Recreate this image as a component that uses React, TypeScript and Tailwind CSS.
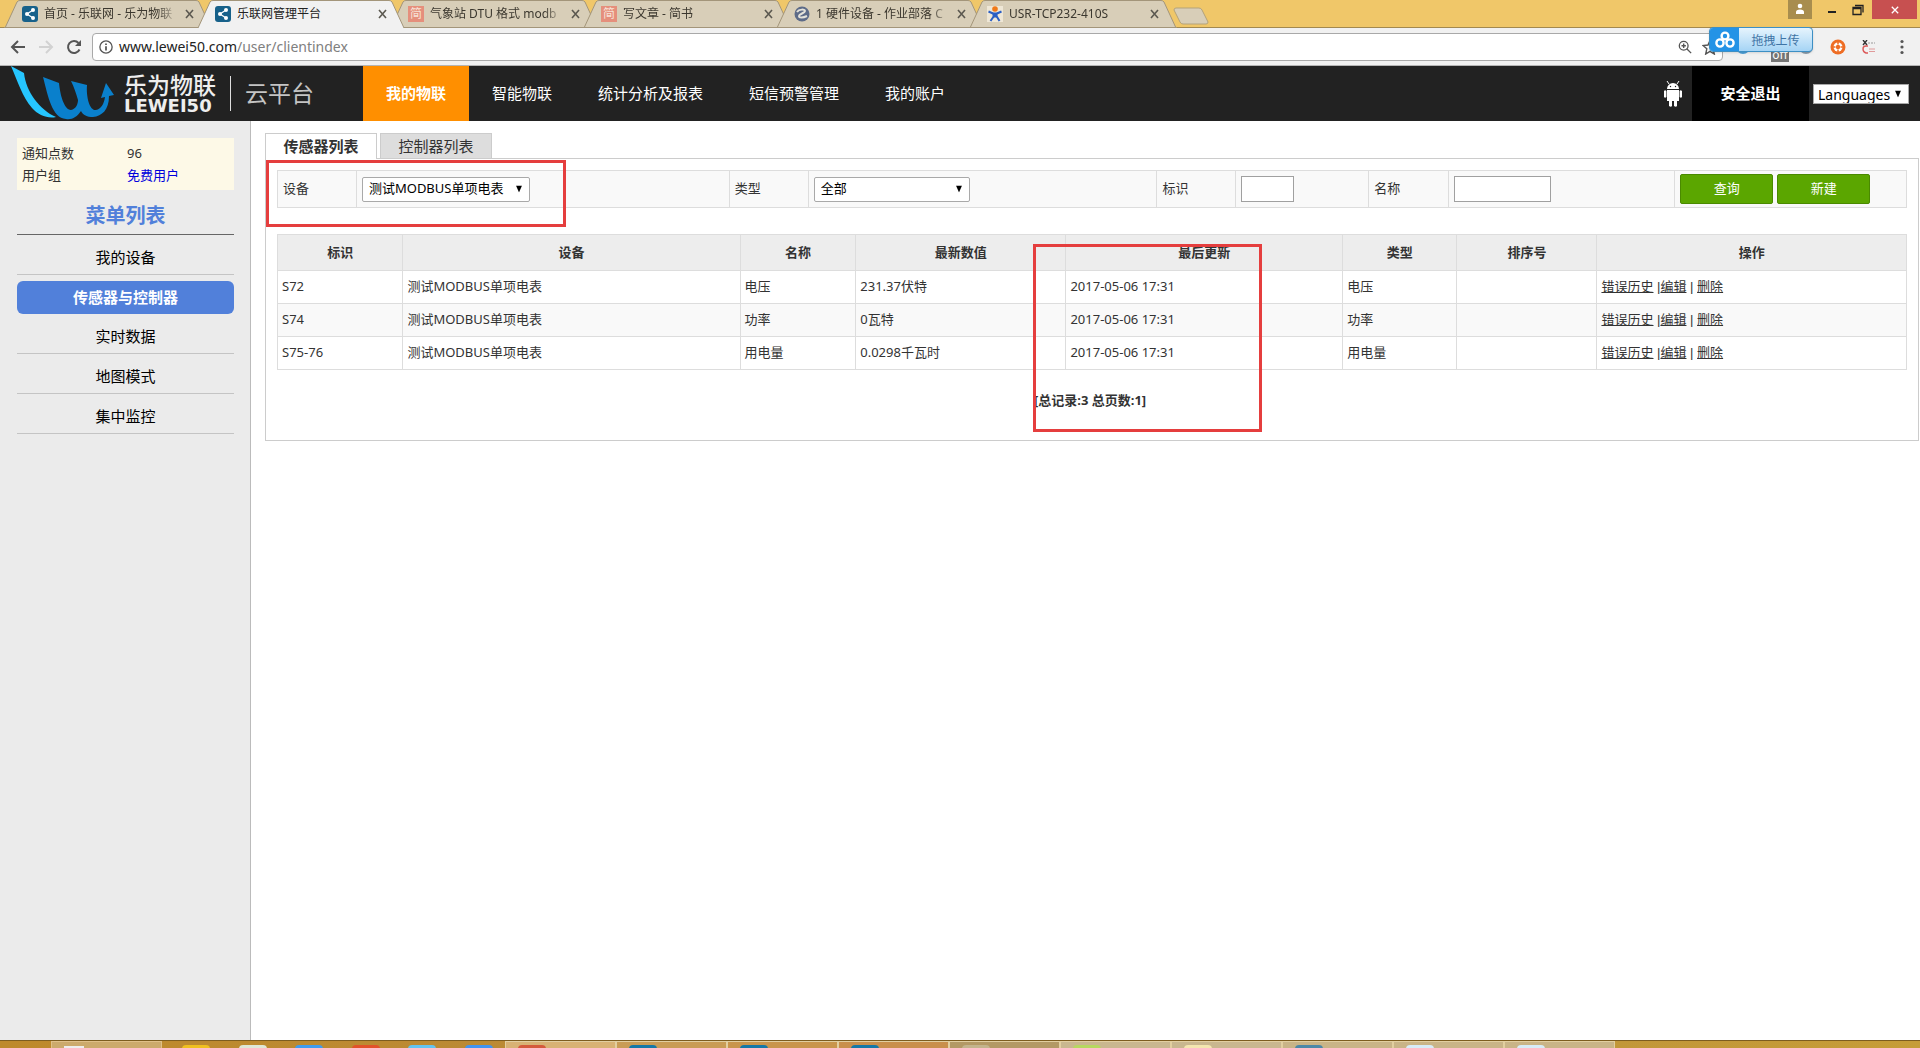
import { useState } from "react";
import type { ReactNode } from "react";

const tabs = [
  { title: "首页 - 乐联网 - 乐为物联", icon: "lewei" },
  { title: "乐联网管理平台", icon: "lewei", active: true },
  { title: "气象站 DTU 格式 modb", icon: "jian" },
  { title: "写文章 - 简书", icon: "jian" },
  { title: "1 硬件设备 - 作业部落 C", icon: "zuoye" },
  { title: "USR-TCP232-410S", icon: "usr" },
];

const navItems = ["我的物联", "智能物联", "统计分析及报表", "短信预警管理", "我的账户"];

const menuItems = ["我的设备", "传感器与控制器", "实时数据", "地图模式", "集中监控"];

const columns = [
  { name: "标识", width: "w-[7.7%]" },
  { name: "设备", width: "w-[20.7%]" },
  { name: "名称", width: "w-[7.1%]" },
  { name: "最新数值", width: "w-[12.9%]" },
  { name: "最后更新", width: "w-[17%]" },
  { name: "类型", width: "w-[7%]" },
  { name: "排序号", width: "w-[8.6%]" },
  { name: "操作", width: "w-[19%]" },
];

const sensors = [
  { id: "S72", device: "测试MODBUS单项电表", name: "电压", value: "231.37伏特", time: "2017-05-06 17:31", type: "电压" },
  { id: "S74", device: "测试MODBUS单项电表", name: "功率", value: "0瓦特", time: "2017-05-06 17:31", type: "功率" },
  { id: "S75-76", device: "测试MODBUS单项电表", name: "用电量", value: "0.0298千瓦时", time: "2017-05-06 17:31", type: "用电量" },
];

function Favicon({ kind }: { kind: string }) {
  if (kind === "jian") {
    return (
      <span className="flex h-4 w-4 shrink-0 items-center justify-center bg-[#e58f7c] text-xs leading-4 text-[#f7e3d8]">简</span>
    );
  }
  if (kind === "zuoye") {
    return (
      <svg viewBox="0 0 16 16" className="h-4 w-4 shrink-0">
        <circle cx="8" cy="8" r="7.5" fill="#5d6b88" />
        <path d="M3 6c2-3 8-3 8-1S5 8 5 10s4 2 8 0" fill="none" stroke="#e4e2da" strokeWidth="2" />
      </svg>
    );
  }
  if (kind === "usr") {
    return (
      <svg viewBox="0 0 16 16" className="h-4 w-4 shrink-0">
        <rect width="16" height="16" fill="#efe7d6" />
        <circle cx="8" cy="3" r="2.8" fill="#f07a1a" />
        <path d="M1.5 5.500L6 7.500M14.500 5.500L10 7.500M7 10l-3.500 5M9.500 10l3 5" stroke="#2b5fc4" strokeWidth="2" />
        <path d="M5 6.500h6l-1 5H6z" fill="#2b5fc4" />
      </svg>
    );
  }
  return (
    <svg viewBox="0 0 16 16" className="h-4 w-4 shrink-0">
      <rect width="16" height="16" rx="3" fill="#17618a" />
      <path d="M11 4L5 8l6 4" fill="none" stroke="#fff" strokeWidth="1.2" />
      <circle cx="11" cy="4" r="2" fill="#fff" />
      <circle cx="5" cy="8" r="2" fill="#fff" />
      <circle cx="11" cy="12" r="2" fill="#fff" />
    </svg>
  );
}

function TabStrip() {
  return (
    <div className="flex h-7 border-b border-[#a3894f] bg-[#f0c769] pl-1">
      {tabs.map((tab) => (
        <div key={tab.title} className={tab.active ? "relative z-10 -mr-[15px] h-7 w-52 shrink-0" : "relative -mr-[15px] h-7 w-52 shrink-0"}>
          <svg viewBox="0 0 208 28" className="absolute inset-0 h-7 w-52">
            <path
              d="M1 28L13 2Q14 .5 16 .5H192Q194 .5 195 2L207 28"
              fill={tab.active ? "#f1f1f1" : "#d8ceb8"}
              stroke="#a3957a"
            />
            {!tab.active && <path d="M0 27.5H208" stroke="#a3957a" />}
          </svg>
          <div className="relative flex h-7 items-center gap-1.5 pr-4 pl-[18px] text-xs text-[#222]">
            <Favicon kind={tab.icon} />
            <span className={tab.active ? "w-[134px] whitespace-nowrap" : "w-[134px] mask-r-from-85% whitespace-nowrap text-[#3c382f]"}>
              {tab.title}
            </span>
            <button aria-label="关闭标签" className="h-3 w-3">
              <svg viewBox="0 0 12 12" className="h-3 w-3">
                <path d="M2 2l7 8M9 2L2 10" stroke="#5b5850" strokeWidth="1.6" />
              </svg>
            </button>
          </div>
        </div>
      ))}
      <button aria-label="新标签" className="mt-[7px] ml-[11px] h-[18px] w-9">
        <svg viewBox="0 0 36 18" className="h-[18px] w-9">
          <path d="M3 1H26Q28 1 29 3L35 15Q35 17 33 17H10Q8 17 7 15L1 3Q1 1 3 1Z" fill="#d8ceb8" stroke="#b3a27a" />
        </svg>
      </button>
      <div className="ml-auto flex h-[19px] pr-[3px]">
        <button aria-label="用户" className="flex w-6 items-center justify-center bg-[#a88d4e]">
          <svg viewBox="0 0 10 12" className="mb-0.5 h-3 w-2.5">
            <circle cx="5" cy="3" r="2.3" fill="#fff" />
            <path d="M1 11V9Q1 6.500 5 6.500T9 9V11Z" fill="#fff" />
          </svg>
        </button>
        <button aria-label="最小化" className="flex w-10 items-end justify-center pb-1.5">
          <span className="h-0.5 w-2 bg-[#222]" />
        </button>
        <button aria-label="还原" className="flex w-5 items-center">
          <svg viewBox="0 0 12 12" className="h-3 w-3">
            <path d="M1 3.500h8v7H1zM1 4.500h8M3 1.500h8v7" fill="none" stroke="#222" strokeWidth="1.3" />
          </svg>
        </button>
        <button aria-label="关闭" className="flex w-[45px] items-center justify-center bg-[#c75050] text-white">
          <svg viewBox="0 0 10 10" className="h-2 w-2.5">
            <path d="M1 1l8 8M9 1L1 9" stroke="#fff" strokeWidth="1.6" />
          </svg>
        </button>
      </div>
    </div>
  );
}

function UploadWidget() {
  return (
    <button className="absolute -top-px right-[107px] z-20 flex h-[25px] w-[104px] overflow-hidden rounded-sm border border-[#3d8fc4] bg-linear-to-b from-[#e6f4fd] to-[#a5d4f5] shadow">
      <span className="flex h-full w-[29px] items-center justify-center bg-[#2493e6]">
        <svg viewBox="0 0 20 18" className="h-[18px] w-5">
          <g fill="none" stroke="#fff" strokeWidth="2.400">
            <circle cx="10" cy="5" r="3.400" />
            <circle cx="5" cy="12" r="3.600" />
            <circle cx="15" cy="12" r="3.600" />
          </g>
        </svg>
      </span>
      <span className="flex-1 text-xs leading-[25px] text-[#3f74a5]">拖拽上传</span>
    </button>
  );
}

function Toolbar() {
  return (
    <div className="relative flex h-[38px] items-center border-b border-[#b5b5b5] bg-[#f1f1f1] pl-2.5">
      <button aria-label="后退" className="w-7">
        <svg viewBox="0 0 16 16" className="h-4 w-4">
          <path d="M15 8H2M8 2L2 8l6 6" fill="none" stroke="#555" strokeWidth="2" />
        </svg>
      </button>
      <button aria-label="前进" className="w-7">
        <svg viewBox="0 0 16 16" className="h-4 w-4">
          <path d="M1 8h13M8 2l6 6-6 6" fill="none" stroke="#d2d2d2" strokeWidth="2" />
        </svg>
      </button>
      <button aria-label="刷新" className="w-[26px]">
        <svg viewBox="0 0 16 16" className="h-4 w-4">
          <path d="M13.500 10.500A6 6 0 1 1 12.500 4" fill="none" stroke="#555" strokeWidth="2" />
          <path d="M15 1v6H9z" fill="#555" />
        </svg>
      </button>
      <div className="flex h-7 flex-1 items-center rounded-sm border border-[#a9a9a9] bg-white pr-1 pl-1.5 text-sm">
        <svg viewBox="0 0 16 16" className="mr-1.5 h-3.5 w-3.5">
          <circle cx="8" cy="8" r="7" fill="none" stroke="#555" strokeWidth="1.500" />
          <path d="M8 7v5M8 4v1.800" stroke="#555" strokeWidth="2" />
        </svg>
        <span className="flex-1 text-[#222]">
          www.lewei50.com<span className="text-[#808080]">/user/clientindex</span>
        </span>
        <svg viewBox="0 0 16 16" className="mr-2.5 h-3.5 w-3.5">
          <circle cx="6.500" cy="6.500" r="5" fill="none" stroke="#555" strokeWidth="1.500" />
          <path d="M10 10l5 5M4 6.500h5M6.500 4v5" stroke="#555" strokeWidth="1.600" />
        </svg>
        <svg viewBox="0 0 16 16" className="h-4 w-4">
          <path d="M8 1.500l2 4.500 5 .5-3.800 3.300L12.300 15 8 12.300 3.700 15l1.100-5.200L1 6.500l5-.5z" fill="none" stroke="#555" strokeWidth="1.400" />
        </svg>
      </div>
      <div className="flex w-[197px] items-center pl-[13px]">
        <span className="h-3.5 w-3.5 rounded-full bg-[#4c9fd8]" />
        <span className="mt-[18px] ml-[21px] h-3 w-[18px] bg-[#757575] text-center text-xs leading-[10px] text-white">off</span>
        <span className="ml-2.5 h-3.5 w-3.5 rounded-full bg-[#8a9cab]" />
        <svg viewBox="0 0 16 16" className="ml-[17px] h-4 w-4">
          <circle cx="8" cy="8" r="7.500" fill="#ee6d24" />
          <circle cx="8" cy="8" r="4.500" fill="#fff" />
          <circle cx="8" cy="8" r="2.200" fill="#ee6d24" />
          <path d="M8 2.500v3M13.500 8h-3M8 13.500v-3M2.500 8h3" stroke="#ee6d24" strokeWidth="1.500" />
        </svg>
        <svg viewBox="0 0 14 14" className="ml-4 h-3.5 w-3.5">
          <path d="M1 0l4 5M5 0L1 5" stroke="#333" strokeWidth="1.400" />
          <path d="M6 3h7" stroke="#999" strokeDasharray="2 1" />
          <path d="M6 6H4Q1 6 1 9t3 4h2" fill="none" stroke="#dc5a5a" strokeWidth="1.400" />
          <path d="M7 9h6M7 11.500h6" stroke="#e09a9a" />
        </svg>
        <svg viewBox="0 0 4 16" className="ml-6 h-4 w-1">
          <circle cx="2" cy="2.500" r="1.600" fill="#555" />
          <circle cx="2" cy="8" r="1.600" fill="#555" />
          <circle cx="2" cy="13.500" r="1.600" fill="#555" />
        </svg>
      </div>
      <UploadWidget />
    </div>
  );
}

function Logo() {
  return (
    <a href="#" className="flex w-[363px] shrink-0 items-center pl-2.5">
      <svg viewBox="0 0 106 55" className="h-[55px] w-[106px] shrink-0">
        <path d="M1 0L14 7C16 26 30 44 46 51C38 53 28 49 22 42C12 30 8 16 1 0Z" fill="#26c6ff" />
        <path
          d="M33 11L49 17C50 28 54 44 61 44C66 43 68 38 68 34C66 27 64 21 61 15L77 19C76 32 80 45 86 44C91 43 94 38 95 31L91 32L96 17L104 29L99 30C99 44 92 50 83 51C77 51 73 49 71 45C67 51 62 54 56 53C42 52 38 30 33 11Z"
          fill="#0a80cc"
        />
      </svg>
      <div className="ml-2 flex w-[94px] shrink-0 flex-col whitespace-nowrap text-[#eee]">
        <span className="text-[23px] leading-6 font-medium">乐为物联</span>
        <span className="font-['DejaVu_Sans',sans-serif] text-lg leading-[18px] font-bold">LEWEI50</span>
      </div>
      <span className="ml-3 h-[35px] w-px bg-[#ddd]" />
      <span className="ml-3.5 text-[23px] text-[#c4c4c4]">云平台</span>
    </a>
  );
}

function Header() {
  return (
    <header className="flex h-[55px] bg-[#222] text-[15px] text-white">
      <Logo />
      <nav className="flex">
        {navItems.map((item, i) => (
          <a
            key={item}
            href="#"
            className={i === 0 ? "flex items-center bg-[#ff8f00] px-[23px] font-bold" : "flex items-center px-[23px]"}
          >
            {item}
          </a>
        ))}
      </nav>
      <div className="ml-auto flex items-center">
        <svg viewBox="0 0 18 26" className="mr-2.5 h-[26px] w-[18px]">
          <path d="M3 8A6 6 0 0 1 15 8ZM3 9h12v11h-2v5q-1 1.500-3 0v-5H8v5q-1 1.500-3 0v-5H3zM0 10q1-1.500 2.400 0v6Q1 17.500 0 16zM15.600 10q1-1.500 2.400 0v6q-1 1.500-2.400 0z" fill="#fff" />
          <path d="M5 3L3 0M13 3l2-3" stroke="#fff" />
          <circle cx="6.500" cy="5.500" r=".7" fill="#222" />
          <circle cx="11.500" cy="5.500" r=".7" fill="#222" />
        </svg>
        <a href="#" className="flex h-full w-[117px] items-center justify-center bg-black text-[15px] font-bold">
          安全退出
        </a>
        <div className="mr-[11px] ml-1 w-24">
          <Dropdown id="lang" label="Languages" options={["Languages"]} className="h-5 text-sm" />
        </div>
      </div>
    </header>
  );
}

function Dropdown({ id, label, options, className }: { id: string; label: string; options: string[]; className: string }) {
  return (
    <div className="relative">
      <select
        id={id}
        aria-label={label}
        className={`block w-full appearance-none border border-[#a9a9a9] bg-white pl-1 text-black ${className}`}
      >
        {options.map((o) => (
          <option key={o}>{o}</option>
        ))}
      </select>
      <svg viewBox="0 0 6 7" className="pointer-events-none absolute top-1/2 right-2 h-[7px] w-1.5 -translate-y-1/2">
        <path d="M0 0h6L3 7z" fill="#000" />
      </svg>
    </div>
  );
}

function Sidebar() {
  const [current, setCurrent] = useState("传感器与控制器");

  return (
    <aside className="w-[251px] shrink-0 border-r border-[#bbb] bg-[#ebebeb] pt-[17px] pr-4 pl-[17px]">
      <dl className="grid grid-cols-[105px_1fr] bg-[#fdf9e7] px-[5px] py-1 text-[13px] leading-[22px] text-[#333]">
        <dt>通知点数</dt>
        <dd>96</dd>
        <dt>用户组</dt>
        <dd>
          <a href="#" className="text-[#0000dd]">免费用户</a>
        </dd>
      </dl>
      <h2 className="border-b border-[#666] pt-2 text-center text-xl leading-9 font-bold text-[#5180da]">菜单列表</h2>
      <ul className="text-center text-[15px] text-black">
        {menuItems.map((item) => (
          <li key={item} className={item === current ? "pt-1.5" : "border-b border-[#c4c4c4] pt-[5px]"}>
            <button
              onClick={() => setCurrent(item)}
              className={
                item === current
                  ? "block h-[33px] w-full rounded-md bg-[#5180da] font-bold text-white"
                  : "block h-[34px] w-full"
              }
            >
              {item}
            </button>
          </li>
        ))}
      </ul>
    </aside>
  );
}

function FilterCell({ children }: { children?: ReactNode }) {
  return <div className="flex items-center border-r border-[#ddd] px-[5px] last:border-r-0">{children}</div>;
}

function FilterBar() {
  return (
    <form
      onSubmit={(e) => e.preventDefault()}
      className="grid h-[38px] grid-cols-[79fr_373fr_79fr_349fr_79fr_133fr_80fr_226fr_231fr] border border-[#ddd] bg-[#f9f9f9]"
    >
      <FilterCell>
        <label htmlFor="device">设备</label>
      </FilterCell>
      <FilterCell>
        <div className="w-[168px]">
          <Dropdown id="device" label="设备" options={["测试MODBUS单项电表"]} className="h-[25px] rounded-xs pl-1.5" />
        </div>
      </FilterCell>
      <FilterCell>
        <label htmlFor="type">类型</label>
      </FilterCell>
      <FilterCell>
        <div className="w-[156px]">
          <Dropdown id="type" label="类型" options={["全部"]} className="h-[25px] rounded-xs pl-1.5" />
        </div>
      </FilterCell>
      <FilterCell>
        <label htmlFor="ident">标识</label>
      </FilterCell>
      <FilterCell>
        <input id="ident" type="text" className="h-[26px] w-[53px] border border-[#a0a0a0] bg-white px-1" />
      </FilterCell>
      <FilterCell>
        <label htmlFor="name">名称</label>
      </FilterCell>
      <FilterCell>
        <input id="name" type="text" className="h-[26px] w-[97px] border border-[#a0a0a0] bg-white px-1" />
      </FilterCell>
      <FilterCell>
        <button type="submit" className="h-[30px] w-[93px] rounded-xs border border-[#4a8a00] bg-[#5ba600] text-white">查询</button>
        <button type="button" className="ml-1 h-[30px] w-[93px] rounded-xs border border-[#4a8a00] bg-[#5ba600] text-white">新建</button>
      </FilterCell>
    </form>
  );
}

function SensorTable() {
  return (
    <table className="mt-[26px] w-full table-fixed border-collapse">
      <thead>
        <tr className="h-9 bg-[#ededed]">
          {columns.map((c) => (
            <th key={c.name} className={`border border-[#ddd] font-bold ${c.width}`}>
              {c.name}
            </th>
          ))}
        </tr>
      </thead>
      <tbody>
        {sensors.map((s) => (
          <tr key={s.id} className="h-[33px] even:bg-[#f9f9f9]">
            <td className="border border-[#ddd] px-1">{s.id}</td>
            <td className="border border-[#ddd] px-1">{s.device}</td>
            <td className="border border-[#ddd] px-1">{s.name}</td>
            <td className="border border-[#ddd] px-1">{s.value}</td>
            <td className="border border-[#ddd] px-1">{s.time}</td>
            <td className="border border-[#ddd] px-1">{s.type}</td>
            <td className="border border-[#ddd] px-1"></td>
            <td className="border border-[#ddd] px-1 font-['Liberation_Sans','Noto_Sans_CJK_SC',sans-serif]">
              <a href="#" className="underline">错误历史</a> |<a href="#" className="underline">编辑</a> |{" "}
              <a href="#" className="underline">删除</a>
            </td>
          </tr>
        ))}
      </tbody>
    </table>
  );
}

function Taskbar() {
  const left = ["bg-[#f0c020]", "bg-[#dfe8d8]", "bg-[#3f9cf0]", "bg-[#e2522a]", "bg-[#63c4f2]", "bg-[#4194f2]"];
  const windows = [
    { bg: "bg-[#d8b274]", icon: "bg-[#d45a3c]" },
    { bg: "bg-[#c99c55]", icon: "bg-[#1478a8]" },
    { bg: "bg-[#c9954c]", icon: "bg-[#1478a8]" },
    { bg: "bg-[#c98f4c]", icon: "bg-[#1478a8]" },
    { bg: "bg-[#b39965]", icon: "bg-[#c4b48c]" },
    { bg: "bg-[#c9b78f]", icon: "bg-[#b6d860]" },
    { bg: "bg-[#c9b78f]", icon: "bg-[#f4e6b0]" },
    { bg: "bg-[#c9b487]", icon: "bg-[#4c88a8]" },
    { bg: "bg-[#c9b487]", icon: "bg-[#d8ecf8]" },
    { bg: "bg-[#c9b487]", icon: "bg-[#d8ecf8]" },
  ];
  return (
    <footer className="flex h-2 overflow-hidden border-t border-[#7d5d20] bg-linear-to-r from-[#be8a2c] via-[#b98a3a] to-[#c69d38]">
      <div className="ml-[51px] h-2 w-[111px] shrink-0 border border-[#e0c088] bg-[#ccaa6c]">
        <span className="mt-1 ml-3 block h-2 w-5 bg-[#eee]" />
      </div>
      <div className="flex w-[343px] shrink-0 justify-between pr-3 pl-5">
        {left.map((color) => (
          <span key={color} className={`mt-1 h-2 w-7 rounded-t-sm ${color}`} />
        ))}
      </div>
      {windows.map((w, i) => (
        <div key={i} className={`h-2 w-[111px] shrink-0 border border-[#e2cfa0] ${w.bg}`}>
          <span className={`mt-[3px] ml-3 block h-2 w-7 rounded-t-sm ${w.icon}`} />
        </div>
      ))}
    </footer>
  );
}

export default function App() {
  return (
    <div className="flex min-h-screen flex-col bg-white font-['Noto_Sans','Noto_Sans_CJK_SC',sans-serif] text-[13px] text-[#333]">
      <TabStrip />
      <Toolbar />
      <Header />
      <div className="flex flex-1">
        <Sidebar />
        <main className="min-w-0 flex-1 pt-3 pr-px pl-3.5">
          <div className="flex gap-[3px] text-[15px]" role="tablist">
            <button role="tab" aria-selected="true" className="z-10 -mb-px h-[26px] w-28 border border-b-0 border-[#ccc] bg-white font-bold">
              传感器列表
            </button>
            <button role="tab" aria-selected="false" className="h-[25px] w-28 border border-b-0 border-[#ccc] bg-[#ddd]">
              控制器列表
            </button>
          </div>
          <section className="relative border border-[#ccc] px-[11px] pt-[11px] pb-[29px]">
            <FilterBar />
            <SensorTable />
            <p className="mt-[19px] pl-[757px] leading-[22px] font-bold">[总记录:3 总页数:1]</p>
            {/* red marker frames */}
            <div className="pointer-events-none absolute top-px left-0 h-[67px] w-[300px] border-3 border-[#e53e3e]" />
            <div className="pointer-events-none absolute top-[85px] left-[767px] h-[188px] w-[229px] border-3 border-[#e53e3e]" />
          </section>
        </main>
      </div>
      <Taskbar />
    </div>
  );
}
